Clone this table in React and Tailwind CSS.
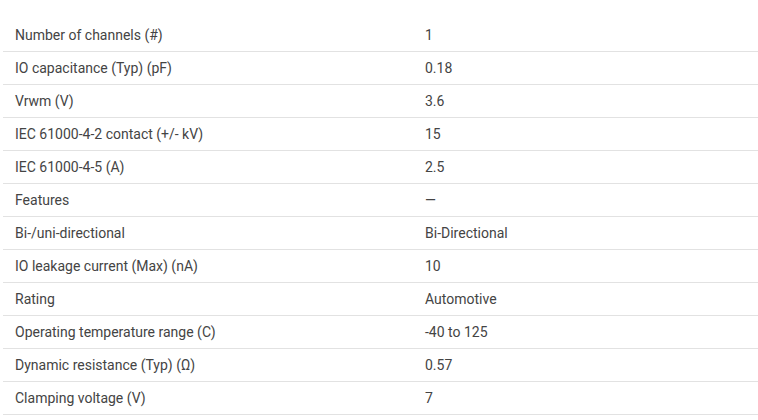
import React from "react";

const rows = [
  ["Number of channels (#)", "1"],
  ["IO capacitance (Typ) (pF)", "0.18"],
  ["Vrwm (V)", "3.6"],
  ["IEC 61000-4-2 contact (+/- kV)", "15"],
  ["IEC 61000-4-5 (A)", "2.5"],
  ["Features", "—"],
  ["Bi-/uni-directional", "Bi-Directional"],
  ["IO leakage current (Max) (nA)", "10"],
  ["Rating", "Automotive"],
  ["Operating temperature range (C)", "-40 to 125"],
  ["Dynamic resistance (Typ) (Ω)", "0.57"],
  ["Clamping voltage (V)", "7"],
];

export default function App() {
  return (
    <div className="w-[758px] h-[420px] overflow-hidden bg-white pt-[19px] pl-[3px] font-['Roboto',sans-serif] text-[14px] text-[#444444]">
      <div className="w-[760px]">
        {rows.map(([k, v]) => (
          <div key={k} className="flex h-[33px] items-center border-b border-[#e2e2e2] pt-px">
            <div className="w-[410px] pl-3">{k}</div>
            <div className="pl-3">{v}</div>
          </div>
        ))}
      </div>
    </div>
  );
}
